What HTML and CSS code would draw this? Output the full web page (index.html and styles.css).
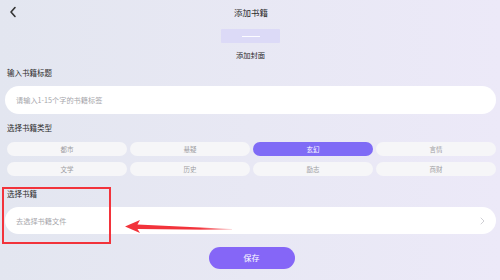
FILE: index.html
```html
<!DOCTYPE html>
<html lang="zh">
<head>
<meta charset="utf-8">
<link rel="stylesheet" href="styles.css">
</head>
<body>
<div class="page">
  <header class="topbar">
    <svg class="back" width="8" height="12" viewBox="0 0 8 12"><path d="M6 1.5 L2 6 L6 10.5" fill="none" stroke="#333" stroke-width="1.6" stroke-linecap="round" stroke-linejoin="round"/></svg>
    <div class="title">添加书籍</div>
  </header>
  <div class="cover"><span class="cover-line"></span></div>
  <div class="cover-label">添加封面</div>

  <div class="label mt8">输入书籍标题</div>
  <div class="field tall"><span class="ph">请输入1-15个字的书籍标签</span></div>

  <div class="label mt9">选择书籍类型</div>
  <div class="chips">
    <div class="chip">都市</div>
    <div class="chip">悬疑</div>
    <div class="chip on">玄幻</div>
    <div class="chip">言情</div>
    <div class="chip">文学</div>
    <div class="chip">历史</div>
    <div class="chip">励志</div>
    <div class="chip">商财</div>
  </div>

  <div class="label mt13">选择书籍</div>
  <div class="field file"><span class="ph">去选择书籍文件</span>
    <svg class="chev" width="5" height="8" viewBox="0 0 5 8"><path d="M1 1 L4 4 L1 7" fill="none" stroke="#cfcfd4" stroke-width="1" stroke-linecap="round"/></svg>
  </div>

  <div class="save-row"><div class="save">保存</div></div>

  <div class="mark-box"></div>
  <svg class="mark-arrow" width="120" height="20" viewBox="0 0 120 20">
    <defs>
      <linearGradient id="fade" x1="0" y1="0" x2="1" y2="0">
        <stop offset="0" stop-color="#f2333b"/>
        <stop offset="0.7" stop-color="#f2333b"/>
        <stop offset="1" stop-color="#f2333b" stop-opacity="0.15"/>
      </linearGradient>
    </defs>
    <path d="M1 7.5 L16 1 L13.5 5.5 L108 10 L108 11 L13.5 10 L16 14 Z" fill="url(#fade)"/>
  </svg>
</div>
</body>
</html>
```
FILE: styles.css
```css
* { box-sizing: border-box; }
html, body { margin: 0; padding: 0; }
body {
  width: 500px;
  height: 280px;
  overflow: hidden;
  font-family: "Noto Sans CJK SC", "Noto Sans", sans-serif;
  color: #333;
}
.page {
  position: relative;
  width: 500px;
  height: 280px;
  background: linear-gradient(90deg, #e3e6f0 0%, #e8e8f4 50%, #ece9f8 100%);
  padding: 0 4px 0 5px;
  display: flex;
  flex-direction: column;
}
.topbar {
  height: 24px;
  position: relative;
  display: flex;
  align-items: center;
  justify-content: center;
}
.back {
  position: absolute;
  left: 4px;
  top: 6px;
}
.title {
  font-size: 8.5px;
  line-height: 10px;
  color: #2b2b2b;
  margin-left: 1px;
}
.cover {
  align-self: center;
  width: 59px;
  height: 14px;
  margin-top: 5px;
  background: #dcdaf7;
  border-radius: 1px;
  display: flex;
  align-items: center;
  justify-content: center;
}
.cover-line {
  width: 18px;
  height: 1px;
  background: #ffffff;
  opacity: 0.9;
}
.cover-label {
  align-self: center;
  margin-top: 7px;
  font-size: 7.3px;
  line-height: 10px;
  color: #2b2b2b;
}
.label {
  padding-left: 2px;
  font-size: 7.5px;
  line-height: 10px;
  color: #2b2b2b;
}
.mt8 { margin-top: 8px; }
.mt9 { margin-top: 9px; }
.mt13 { margin-top: 13px; }
.field {
  margin-top: 8px;
  height: 27px;
  background: #ffffff;
  border-radius: 14px;
  display: flex;
  align-items: center;
  padding-left: 11px;
  padding-right: 11px;
}
.field.tall { height: 28px; }
.ph {
  font-size: 7.2px;
  color: #a6a6ab;
  flex: 1;
}
.chips {
  margin-top: 9px;
  padding-left: 2px;
  display: grid;
  grid-template-columns: repeat(4, 120px);
  column-gap: 3px;
  row-gap: 6px;
}
.chip {
  height: 14px;
  border-radius: 7px;
  background: #f6f6f8;
  font-size: 6.5px;
  line-height: 14px;
  text-align: center;
  color: #9d9da2;
}
.chip.on {
  background: #7f6bf6;
  color: #ffffff;
}
.save-row {
  margin-top: 13px;
  display: flex;
  justify-content: center;
}
.save {
  width: 86px;
  height: 22px;
  margin-left: 2px;
  border-radius: 11px;
  background: #8566f7;
  color: #ffffff;
  font-size: 8px;
  line-height: 22px;
  text-align: center;
}
.mark-box {
  position: absolute;
  left: 2px;
  top: 187px;
  width: 109px;
  height: 57px;
  border: 2px solid #f2333b;
}
.mark-arrow {
  position: absolute;
  left: 124px;
  top: 219px;
}
```
